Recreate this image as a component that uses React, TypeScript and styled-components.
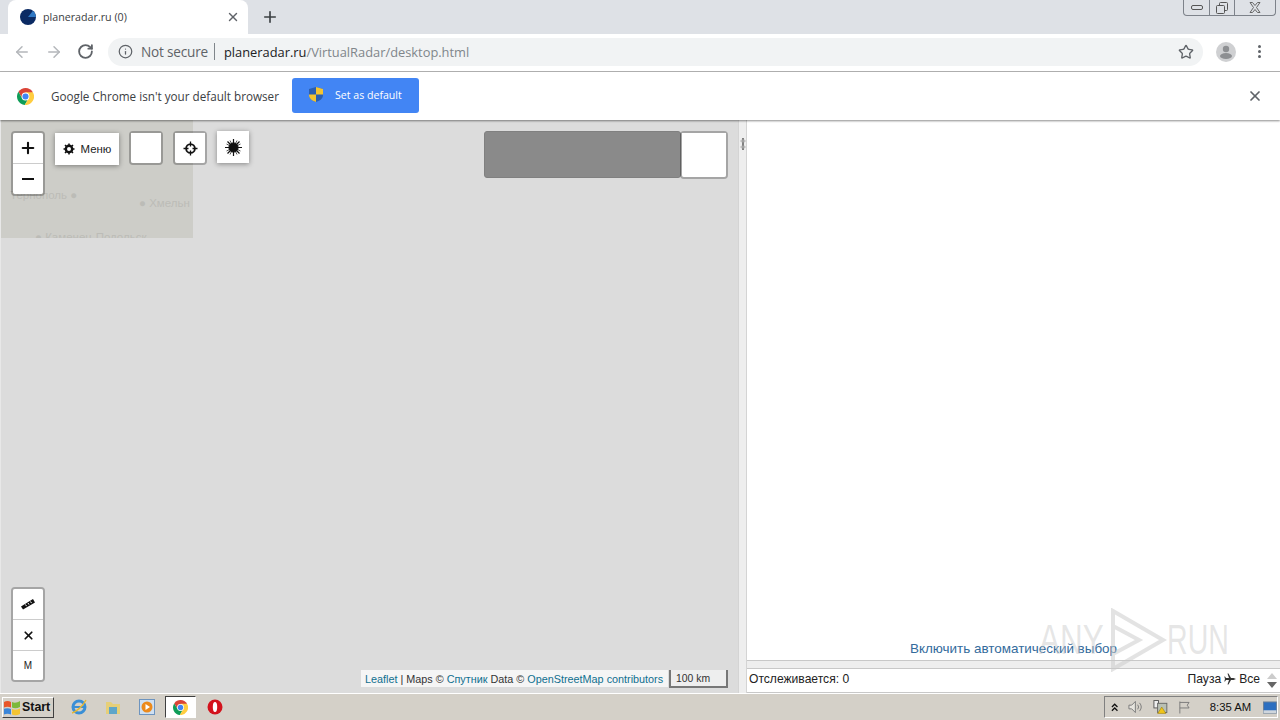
import styled, { createGlobalStyle } from 'styled-components';
import { ArrowLeft, ArrowRight, Info, Plus, RotateCw, Star, X } from 'lucide-react';

const GlobalStyle = createGlobalStyle`
	html, body {
		margin: 0;
		padding: 0;
		width: 1280px;
		height: 720px;
		overflow: hidden;
		background: #fff;
		font-family: 'Liberation Sans', Arial, sans-serif;
	}
`;

const Screen = styled.div`
	width: 1280px;
	height: 720px;
	display: flex;
	flex-direction: column;
	overflow: hidden;
`;

const TabStrip = styled.div`
	height: 34px;
	flex: none;
	background: #dee1e6;
	display: flex;
	align-items: flex-start;
	padding-left: 8px;
`;

const Tab = styled.div`
	width: 240px;
	height: 34px;
	background: #fff;
	border-radius: 8px 8px 0 0;
	display: flex;
	align-items: center;
	padding: 0 8px 0 12px;
	box-sizing: border-box;
	gap: 7px;
	font-family: 'Open Sans', sans-serif;
	font-size: 10.7px;
	color: #3c4043;
`;

const TabTitle = styled.span`
	flex: 1;
`;

const NewTab = styled.div`
	margin: 8px 0 0 13px;
	width: 18px;
	height: 18px;
	color: #3c4043;
`;

const WindowButtons = styled.div`
	margin-left: auto;
	margin-right: 4px;
	width: 93px;
	height: 16px;
	border: 1px solid #7d828a;
	border-top: none;
	border-radius: 0 0 4px 4px;
	box-sizing: border-box;
	display: grid;
	grid-template-columns: 25px 25px 1fr;
`;

const WindowButton = styled.div`
	display: flex;
	align-items: center;
	justify-content: center;
	border-left: 1px solid #7d828a;
	&:first-child {
		border-left: none;
	}
`;

const Toolbar = styled.div`
	height: 38px;
	flex: none;
	box-sizing: border-box;
	background: #fff;
	border-bottom: 1px solid #b4b4b4;
	display: flex;
	align-items: center;
	padding: 0 10px 2px 13px;
`;

const NavButton = styled.div<{ $dim?: boolean; $gap?: number }>`
	width: 18px;
	height: 18px;
	margin-right: ${(props) => props.$gap ?? 14}px;
	color: ${(props) => (props.$dim ? '#b4b7bb' : '#5f6368')};
`;

const Omnibox = styled.div`
	width: 1095px;
	height: 28px;
	border-radius: 14px;
	background: #f1f3f4;
	display: flex;
	align-items: center;
	padding: 0 9px 0 10px;
	box-sizing: border-box;
	font-family: 'Open Sans', sans-serif;
	font-size: 12.85px;
	color: #5f6368;
`;

const NotSecure = styled.span`
	margin-left: 8px;
	padding-right: 6px;
	margin-right: 9px;
	border-right: 1px solid #80868b;
	line-height: 17px;
	font-size: 13.6px;
	letter-spacing: -0.2px;
`;

const Host = styled.span`
	color: #202124;
`;

const UrlPath = styled.span`
	color: #80868b;
	flex: 1;
`;

const Avatar = styled.div`
	width: 20px;
	height: 20px;
	margin-left: 13px;
`;

const Dots = styled.div`
	margin-left: 22px;
	display: flex;
	flex-direction: column;
	gap: 2px;
	span {
		width: 3px;
		height: 3px;
		border-radius: 50%;
		background: #5f6368;
	}
`;

const InfoBar = styled.div`
	height: 48px;
	flex: none;
	position: relative;
	z-index: 1;
	background: #fff;
	display: flex;
	align-items: center;
	padding: 0 17px 0 17px;
	box-sizing: border-box;
	font-family: 'Open Sans', sans-serif;
	font-size: 11.7px;
	color: #3c4043;
	box-shadow: 0 1px 2px rgba(0, 0, 0, 0.45);
`;

const InfoText = styled.span`
	margin: 0 0 1px 17px;
	width: 241px;
`;

const DefaultButton = styled.div`
	width: 127px;
	height: 35px;
	background: #4285f4;
	border-radius: 3px;
	display: flex;
	align-items: center;
	gap: 12px;
	padding: 0 0 2px 17px;
	box-sizing: border-box;
	color: #fff;
	font-size: 10.6px;
	margin-bottom: 1px;
`;

const InfoClose = styled.div`
	margin-left: auto;
	width: 16px;
	height: 16px;
	color: #5f6368;
`;

const Main = styled.div`
	flex: 1;
	min-height: 0;
	display: flex;
	background: #eee;
`;

const MapArea = styled.div`
	width: 738px;
	position: relative;
	background: #dcdcdc;
	border-left: 1px solid #e8e8e8;
	box-sizing: border-box;
	overflow: hidden;
`;

const Tile = styled.div`
	position: absolute;
	left: 0;
	top: 0;
	width: 192px;
	height: 118px;
	background: #cdcdc8;
	font-size: 11.5px;
	color: #bcbcb7;
	overflow: hidden;
`;

const TileLabel = styled.span<{ $x: number; $y: number }>`
	position: absolute;
	left: ${(props) => props.$x}px;
	top: ${(props) => props.$y}px;
	white-space: nowrap;
`;

const ControlStack = styled.div<{ $x: number; $y: number; $w?: number }>`
	position: absolute;
	left: ${(props) => props.$x}px;
	top: ${(props) => props.$y}px;
	width: ${(props) => props.$w ?? 34}px;
	box-sizing: border-box;
	border: 2px solid rgba(0, 0, 0, 0.25);
	border-radius: 4px;
	background-clip: padding-box;
	display: flex;
	flex-direction: column;
`;

const ControlCell = styled.div<{ $h: number }>`
	height: ${(props) => props.$h}px;
	background: #fff;
	display: flex;
	align-items: center;
	justify-content: center;
	font-size: 10px;
	color: #222;
	& + & {
		border-top: 1px solid #ccc;
	}
	&:first-child {
		border-radius: 2px 2px 0 0;
	}
	&:last-child {
		border-radius: 0 0 2px 2px;
	}
`;

const FloatButton = styled.div<{ $x: number; $y: number; $w: number; $h: number }>`
	position: absolute;
	left: ${(props) => props.$x}px;
	top: ${(props) => props.$y}px;
	width: ${(props) => props.$w}px;
	height: ${(props) => props.$h}px;
	background: #fff;
	box-shadow: 0 1px 5px rgba(0, 0, 0, 0.4);
	display: flex;
	align-items: center;
	justify-content: center;
	gap: 6px;
	font-size: 11.4px;
	color: #222;
`;

const GreyBlock = styled.div`
	position: absolute;
	left: 483px;
	top: 11px;
	width: 197px;
	height: 47px;
	background: #8a8a8a;
	border: 1px solid #808080;
	border-radius: 3px;
	box-sizing: border-box;
`;

const Attribution = styled.div`
	position: absolute;
	left: 360px;
	top: 550px;
	height: 17px;
	width: 307px;
	background: rgba(255, 255, 255, 0.7);
	font-size: 10.82px;
	line-height: 18px;
	padding-left: 4px;
	box-sizing: border-box;
	color: #333;
	white-space: nowrap;
`;

const AttrLink = styled.span`
	color: #0f6f8f;
`;

const ScaleBar = styled.div`
	position: absolute;
	left: 668px;
	top: 550px;
	width: 59px;
	height: 18px;
	box-sizing: border-box;
	border: 2px solid #777;
	border-top: none;
	background: rgba(255, 255, 255, 0.5);
	font-size: 10.4px;
	line-height: 17px;
	padding-left: 5px;
	color: #333;
`;

const Splitter = styled.div`
	width: 8px;
	flex: none;
	background: #eee;
	border-left: 1px solid #d4d4d4;
	box-sizing: border-box;
	display: flex;
	flex-direction: column;
	align-items: center;
	padding-top: 18px;
`;

const RightPanel = styled.div`
	flex: 1;
	display: flex;
	flex-direction: column;
	position: relative;
	border-left: 1px solid #d4d4d4;
`;

const PlaneList = styled.div`
	height: 541px;
	flex: none;
	background: #fff;
	border-bottom: 1px solid #c8c8c8;
	box-sizing: border-box;
	display: flex;
	align-items: flex-end;
	justify-content: center;
	padding-bottom: 4px;
	font-size: 13.45px;
	color: #336b9c;
`;

const PanelGap = styled.div`
	height: 7px;
	flex: none;
	background: #eee;
	border-bottom: 1px solid #c8c8c8;
`;

const StatusRow = styled.div`
	height: 24px;
	flex: none;
	background: #fff;
	border-bottom: 1px solid #c8c8c8;
	box-sizing: border-box;
	display: flex;
	align-items: center;
	justify-content: space-between;
	padding: 0 3px 4px 2px;
	font-size: 12.1px;
	color: #222;
`;

const StatusRight = styled.div`
	display: flex;
	align-items: center;
	gap: 3px;
`;

const Spinner = styled.div`
	display: flex;
	flex-direction: column;
	gap: 3px;
	margin: 4px 0 0 4px;
	i {
		width: 0;
		height: 0;
		border-left: 5px solid transparent;
		border-right: 5px solid transparent;
	}
	i:first-child {
		border-bottom: 6px solid #ccc;
	}
	i:last-child {
		border-top: 6px solid #666;
	}
`;

const Watermark = styled.div`
	position: absolute;
	left: 292px;
	top: 488px;
	display: flex;
	align-items: center;
	pointer-events: none;
`;

const WatermarkWord = styled.span<{ $w: number; $scale: number }>`
	display: block;
	width: ${(props) => props.$w}px;
	font-size: 42px;
	color: rgba(200, 200, 200, 0.45);
	transform: scaleX(${(props) => props.$scale});
	transform-origin: left center;
	white-space: nowrap;
`;

const Taskbar = styled.div`
	height: 27px;
	flex: none;
	background: #d4d0c8;
	border-top: 1px solid #fff;
	box-sizing: border-box;
	display: flex;
	align-items: center;
`;

const StartButton = styled.div`
	margin-left: 2px;
	width: 52px;
	height: 21px;
	background: #d4d0c8;
	border: 1px solid;
	border-color: #fff #404040 #404040 #fff;
	box-sizing: border-box;
	display: flex;
	align-items: center;
	gap: 1px;
	font-size: 12.4px;
	font-weight: 700;
	color: #111;
`;

const QuickIcon = styled.div<{ $active?: boolean; $gap?: number }>`
	width: 31px;
	height: 22px;
	margin-left: ${(props) => props.$gap ?? 3}px;
	display: flex;
	align-items: center;
	justify-content: center;
	box-sizing: border-box;
	background: ${(props) => (props.$active ? '#fff' : 'transparent')};
	border: ${(props) => (props.$active ? '1px solid' : 'none')};
	border-color: #404040 #fff #fff #404040;
`;

const Tray = styled.div`
	margin-left: auto;
	margin-right: 2px;
	width: 174px;
	height: 22px;
	border: 1px solid;
	border-color: #808080 #fff #fff #808080;
	box-sizing: border-box;
	display: flex;
	align-items: center;
	padding-left: 6px;
	gap: 10px;
`;

const Clock = styled.span`
	font-size: 11.3px;
	color: #111;
	margin-left: 8px;
	width: 47px;
`;

function ChromeLogo({ size = 16 }: { size?: number }) {
	return (
		<svg width={size} height={size} viewBox="0 0 24 24">
			<path d="M12 12 L22.4 6 A12 12 0 0 0 2 5.4 L7 14 Z" fill="#db4437" />
			<path d="M12 12 L7 14 L2 5.4 A12 12 0 0 0 11 24 L16 15 Z" fill="#0f9d58" />
			<path d="M12 12 L16 15 L11 24 A12 12 0 0 0 22.4 6 L12 6 Z" fill="#ffcd40" />
			<circle cx="12" cy="12" r="5.5" fill="#fff" />
			<circle cx="12" cy="12" r="4.3" fill="#4285f4" />
		</svg>
	);
}

function Crosshair() {
	return (
		<svg width="15" height="15" viewBox="0 0 15 15" fill="none" stroke="#111">
			<circle cx="7.5" cy="7.5" r="4.4" strokeWidth="1.8" />
			<path d="M7.5 0.5v5M7.5 9.5v5M0.5 7.5h5M9.5 7.5h5" strokeWidth="1.3" />
		</svg>
	);
}

function Sun() {
	return (
		<svg width="17" height="17" viewBox="0 0 17 17" stroke="#111" fill="#111">
			<circle cx="8.5" cy="8.5" r="4.6" />
			<path d="M8.5 0v17M0 8.5h17M2.5 2.5l12 12M14.5 2.5l-12 12" strokeWidth="1.2" />
			<path d="M5 1.5l7 14M12 1.5l-7 14M1.5 5l14 7M1.5 12l14-7" strokeWidth="0.7" />
		</svg>
	);
}

function Gear() {
	return (
		<svg width="12" height="12" viewBox="0 0 12 12" fill="none" stroke="#111">
			<circle cx="6" cy="6" r="3.2" strokeWidth="2.4" />
			<path d="M6 0.5v2M6 9.5v2M0.5 6h2M9.5 6h2M2 2l1.4 1.4M8.6 8.6L10 10M10 2L8.6 3.4M3.4 8.6L2 10" strokeWidth="1.5" />
		</svg>
	);
}

function Ruler() {
	return (
		<svg width="16" height="12" viewBox="0 0 16 12">
			<path d="M1 8.5 L13 1 L15 4.5 L3 11.5 Z" fill="#111" />
			<path d="M5.5 6.5l1 1.6M8 5l1 1.6M10.5 3.5l1 1.6" stroke="#fff" strokeWidth="1" />
		</svg>
	);
}

function Plane() {
	return (
		<svg width="12" height="12" viewBox="0 0 12 12" fill="#333">
			<path d="M12 6 L9.5 5 L7 5 L4.5 0.5 L3.5 0.5 L5 5 L2 5 L1 3.5 L0.3 3.5 L1 6 L0.3 8.5 L1 8.5 L2 7 L5 7 L3.5 11.5 L4.5 11.5 L7 7 L9.5 7 Z" />
		</svg>
	);
}

function Grip() {
	return (
		<svg width="6" height="6" viewBox="0 0 6 6" fill="#777" stroke="#777" strokeWidth="0.8">
			<path d="M3 0.5v5M0.5 3h5" />
			<path d="M2 1.2L3 0L4 1.2ZM2 4.8L3 6L4 4.8Z" />
		</svg>
	);
}

export default function App() {
	return (
		<Screen>
			<GlobalStyle />
			<TabStrip>
				<Tab>
					<svg width="16" height="16" viewBox="0 0 16 16">
						<circle cx="8" cy="8" r="8" fill="#0b2a63" />
						<path d="M8 8 L13 1.8 A8 8 0 0 1 16 8 Z" fill="#2f78c4" />
					</svg>
					<TabTitle>planeradar.ru (0)</TabTitle>
					<X size={14} color="#5f6368" strokeWidth={2.4} />
				</Tab>
				<NewTab>
					<Plus size={18} strokeWidth={2.2} />
				</NewTab>
				<WindowButtons>
					<WindowButton>
						<svg width="12" height="6" viewBox="0 0 12 6" fill="none" stroke="#555">
							<rect x="0.5" y="0.5" width="11" height="4" rx="1.5" />
						</svg>
					</WindowButton>
					<WindowButton>
						<svg width="12" height="12" viewBox="0 0 12 12" fill="none" stroke="#555">
							<rect x="3.5" y="0.5" width="8" height="8" rx="1" />
							<rect x="0.5" y="3.5" width="8" height="8" rx="1" fill="#dee1e6" />
						</svg>
					</WindowButton>
					<WindowButton>
						<svg width="12" height="11" viewBox="0 0 12 11" fill="none" stroke="#666">
							<path d="M1 0.5h2.5L6 3.5 8.5 0.5H11L7.5 5.5 11 10.5H8.5L6 7.5 3.5 10.5H1L4.5 5.5Z" />
						</svg>
					</WindowButton>
				</WindowButtons>
			</TabStrip>
			<Toolbar>
				<NavButton $dim>
					<ArrowLeft size={18} />
				</NavButton>
				<NavButton $dim>
					<ArrowRight size={18} />
				</NavButton>
				<NavButton $gap={13}>
					<RotateCw size={17} strokeWidth={2.6} />
				</NavButton>
				<Omnibox>
					<Info size={15} />
					<NotSecure>Not secure</NotSecure>
					<Host>planeradar.ru</Host>
					<UrlPath>/VirtualRadar/desktop.html</UrlPath>
					<Star size={16} color="#5f6368" strokeWidth={2} />
				</Omnibox>
				<Avatar>
					<svg width="20" height="20" viewBox="0 0 20 20">
						<circle cx="10" cy="10" r="10" fill="#cfd0d2" />
						<circle cx="10" cy="7" r="3.2" fill="#8d8f92" />
						<ellipse cx="10" cy="14" rx="6" ry="3" fill="#8d8f92" />
					</svg>
				</Avatar>
				<Dots>
					<span />
					<span />
					<span />
				</Dots>
			</Toolbar>
			<InfoBar>
				<ChromeLogo size={17} />
				<InfoText>Google Chrome isn't your default browser</InfoText>
				<DefaultButton>
					<svg width="14" height="15" viewBox="0 0 14 15">
						<path d="M7 0 L14 2 V8 C14 12 10 14 7 15 C4 14 0 12 0 8 V2 Z" fill="#2b5fb0" />
						<path d="M7 0 L14 2 V7.5 H7 Z" fill="#f4c430" />
						<path d="M7 7.5 V15 C4 14 0 12 0 8 V7.5 Z" fill="#f4c430" />
					</svg>
					Set as default
				</DefaultButton>
				<InfoClose>
					<X size={16} strokeWidth={2.6} />
				</InfoClose>
			</InfoBar>
			<Main>
				<MapArea>
					<Tile>
						<TileLabel $x={9} $y={69}>Тернополь ●</TileLabel>
						<TileLabel $x={138} $y={77}>● Хмельн</TileLabel>
						<TileLabel $x={34} $y={111}>● Каменец-Подольск</TileLabel>
					</Tile>
					<ControlStack $x={10} $y={11}>
						<ControlCell $h={30}>
							<Plus size={18} color="#111" strokeWidth={2.8} />
						</ControlCell>
						<ControlCell $h={30}>
							<svg width="12" height="2" viewBox="0 0 12 2">
								<rect width="12" height="2" fill="#111" />
							</svg>
						</ControlCell>
					</ControlStack>
					<FloatButton $x={54} $y={13} $w={64} $h={32}>
						<Gear />
						Меню
					</FloatButton>
					<ControlStack $x={128} $y={11}>
						<ControlCell $h={30} />
					</ControlStack>
					<ControlStack $x={172} $y={11}>
						<ControlCell $h={30}>
							<Crosshair />
						</ControlCell>
					</ControlStack>
					<FloatButton $x={216} $y={11} $w={32} $h={32}>
						<Sun />
					</FloatButton>
					<GreyBlock />
					<ControlStack $x={679} $y={11} $w={48}>
						<ControlCell $h={44} />
					</ControlStack>
					<ControlStack $x={10} $y={467}>
						<ControlCell $h={30}>
							<Ruler />
						</ControlCell>
						<ControlCell $h={30}>
							<X size={13} color="#111" strokeWidth={3.2} />
						</ControlCell>
						<ControlCell $h={29}>M</ControlCell>
					</ControlStack>
					<Attribution>
						<AttrLink>Leaflet</AttrLink> | Maps © <AttrLink>Спутник</AttrLink> Data © <AttrLink>OpenStreetMap contributors</AttrLink>
					</Attribution>
					<ScaleBar>100 km</ScaleBar>
				</MapArea>
				<Splitter>
					<Grip />
					<Grip />
				</Splitter>
				<RightPanel>
					<PlaneList>Включить автоматический выбор</PlaneList>
					<PanelGap />
					<StatusRow>
						<span>Отслеживается: 0</span>
						<StatusRight>
							Пауза <Plane /> Все
							<Spinner>
								<i />
								<i />
							</Spinner>
						</StatusRight>
					</StatusRow>
					<Watermark>
						<WatermarkWord $w={70} $scale={0.75}>ANY</WatermarkWord>
						<svg width="58" height="64" viewBox="0 0 58 64" fill="none" stroke="rgba(200,200,200,0.5)" strokeWidth="4">
							<path d="M4 3 L54 32 L4 61 Z M4 18 L30 32 L4 46" />
						</svg>
						<WatermarkWord $w={62} $scale={0.68}>RUN</WatermarkWord>
					</Watermark>
				</RightPanel>
			</Main>
			<Taskbar>
				<StartButton>
					<svg width="18" height="17" viewBox="0 0 18 17">
						<path d="M1 3 C3 1.5 6 1.5 8 3 V8.5 C6 7.5 3 7.5 1 8.5 Z" fill="#e8562a" />
						<path d="M9 3 C11 4 14 4 17 2 V8 C14 9.5 11 9.5 9 8.5 Z" fill="#7cb93c" />
						<path d="M1 9.8 C3 9 6 9 8 10 V15.5 C6 14.5 3 14.5 1 15.5 Z" fill="#3b86d8" />
						<path d="M9 10 C11 11 14 11 17 9.5 V15 C14 16.5 11 16.5 9 15.5 Z" fill="#f4c430" />
					</svg>
					Start
				</StartButton>
				<QuickIcon $gap={9}>
					<svg width="18" height="18" viewBox="0 0 18 18" fill="none">
						<circle cx="9" cy="9" r="6" stroke="#3a8fd6" strokeWidth="3" />
						<path d="M4 9h10" stroke="#3a8fd6" strokeWidth="2" />
						<path d="M2 15 C6 14 13 8 16 2" stroke="#e8b830" strokeWidth="1.4" />
					</svg>
				</QuickIcon>
				<QuickIcon>
					<svg width="16" height="15" viewBox="0 0 16 15">
						<path d="M1 2h5l2 2h7v10H1Z" fill="#e6cf78" />
						<rect x="4" y="7" width="8" height="7" fill="#5fa6c9" />
					</svg>
				</QuickIcon>
				<QuickIcon>
					<svg width="16" height="16" viewBox="0 0 16 16">
						<rect x="0.5" y="0.5" width="15" height="15" fill="#cfe0f2" stroke="#6d94bf" />
						<circle cx="8" cy="8" r="5.5" fill="#ec8a1c" />
						<path d="M6.5 5 L11 8 L6.5 11 Z" fill="#fff" />
					</svg>
				</QuickIcon>
				<QuickIcon $active $gap={3}>
					<ChromeLogo size={15} />
				</QuickIcon>
				<QuickIcon>
					<svg width="16" height="16" viewBox="0 0 16 16">
						<circle cx="8" cy="8" r="7.5" fill="#d3121c" />
						<ellipse cx="8" cy="8" rx="2.2" ry="5" fill="#fff" />
					</svg>
				</QuickIcon>
				<Tray>
					<svg width="8" height="9" viewBox="0 0 8 9" fill="none" stroke="#111" strokeWidth="1.4">
						<path d="M1 4 L4 1 L7 4 M1 8 L4 5 L7 8" />
					</svg>
					<svg width="16" height="14" viewBox="0 0 16 14" fill="none" stroke="#777">
						<path d="M1 5h3l4-4v12l-4-4H1Z" fill="#e6e4de" />
						<path d="M10.5 4.5a4 4 0 0 1 0 5M12.5 2.5a7 7 0 0 1 0 9" />
					</svg>
					<svg width="16" height="16" viewBox="0 0 16 16">
						<rect x="1" y="1" width="5" height="8" fill="#eee" stroke="#555" />
						<rect x="5" y="4" width="10" height="10" fill="#b9c0b4" stroke="#666" />
						<path d="M9.5 8 L14 15 H5 Z" fill="#f0c419" stroke="#8a6d00" strokeWidth="0.5" />
					</svg>
					<svg width="15" height="15" viewBox="0 0 15 15" fill="none" stroke="#777">
						<path d="M2 1v13M2 2h10l-2 3 2 3H2" />
					</svg>
					<Clock>8:35 AM</Clock>
					<svg width="15" height="13" viewBox="0 0 15 13">
						<rect x="0.5" y="0.5" width="14" height="12" fill="#2d6fc0" stroke="#6a7f96" />
						<rect x="0.5" y="9.5" width="14" height="3" fill="#cfd6dd" />
					</svg>
				</Tray>
			</Taskbar>
		</Screen>
	);
}
